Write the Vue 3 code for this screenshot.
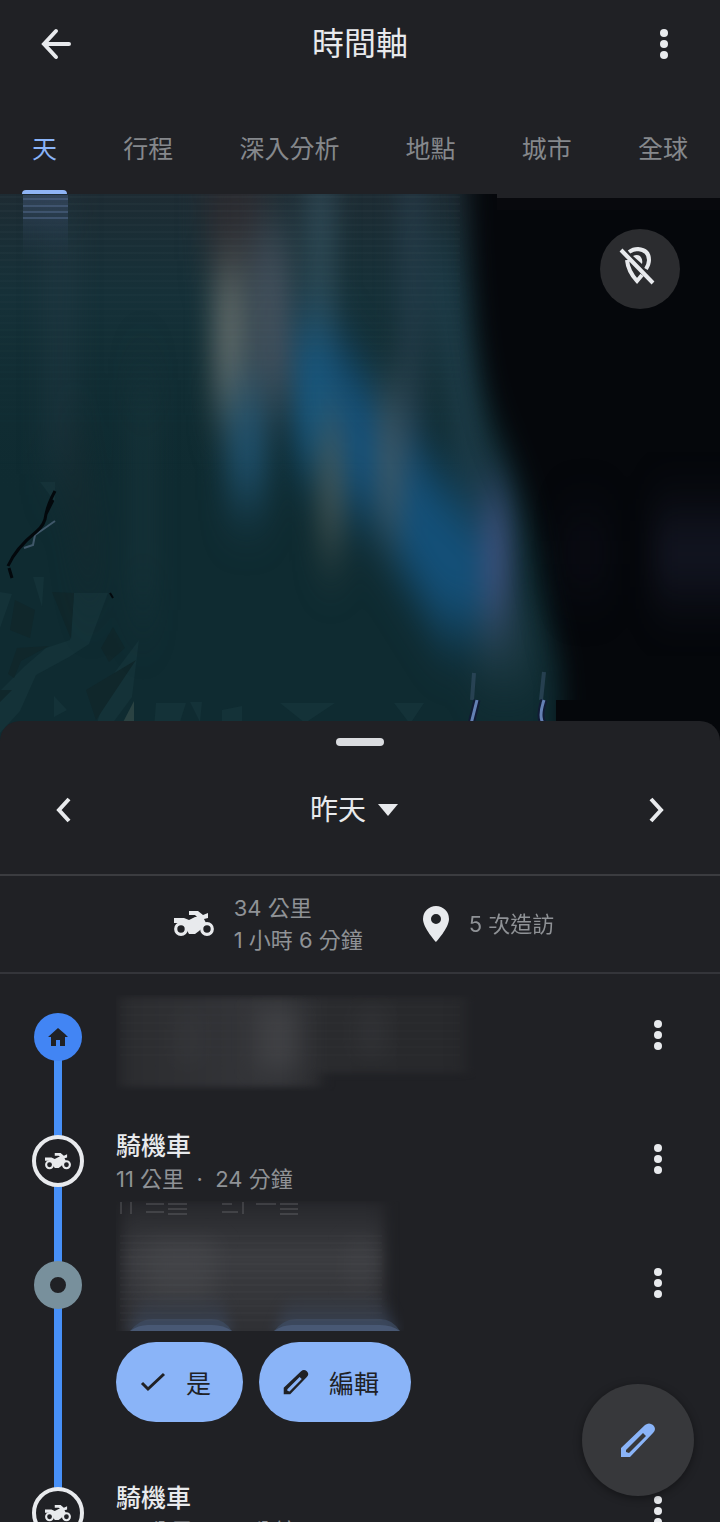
<script setup>
import { ref } from 'vue'

const tabs = ['天', '行程', '深入分析', '地點', '城市', '全球']
const activeTab = ref('天')

const entries = [
  { id: 1, kind: 'home' },
  { id: 2, kind: 'ride', title: '騎機車', detail: '11 公里  ·  24 分鐘' },
  { id: 3, kind: 'place' },
  { id: 4, kind: 'ride', title: '騎機車', detail: '8.1 公里  ·  12 分鐘' }
]
</script>

<template>
  <main class="app">
    <svg class="defs" aria-hidden="true">
      <symbol id="dots" viewBox="0 0 32 32">
        <circle cx="16" cy="5" r="4" /><circle cx="16" cy="16" r="4" /><circle cx="16" cy="27" r="4" />
      </symbol>
      <symbol id="bike" viewBox="0 0 40 26">
        <circle cx="7" cy="18" r="5.3" fill="none" stroke="currentColor" stroke-width="3.2" />
        <circle cx="33" cy="18" r="5.3" fill="none" stroke="currentColor" stroke-width="3.2" />
        <path d="M0 7h10l5 2 6-3h2l-2-2h-6V0h9l5 4 5-2v5l-4 1 2 4-4 5-3 3-4 3h-6l-5-9-4-2H0z" />
      </symbol>
      <symbol id="pen" viewBox="0 0 36 36">
        <path fill-rule="evenodd" d="M1 26 25 3q4-3 8 0 4 4 0 8L10 35H1zM6 28v2l3 1 17-17-3-3z" />
      </symbol>
    </svg>

    <header class="top-bar">
      <button type="button" class="icon-button" aria-label="返回">
        <svg class="back" viewBox="0 0 32 32"><path d="M29 16H4M16 3 4 16l12 13" /></svg>
      </button>
      <h1>時間軸</h1>
      <button type="button" class="icon-button" aria-label="更多">
        <svg class="dots"><use href="#dots" /></svg>
      </button>
    </header>

    <nav class="tabs">
      <button
        v-for="tab in tabs"
        :key="tab"
        type="button"
        class="tab"
        :class="{ active: tab === activeTab }"
        @click="activeTab = tab"
      >{{ tab }}</button>
    </nav>

    <section class="map">
      <svg class="map-canvas" viewBox="0 194 720 547" preserveAspectRatio="xMidYMin slice" aria-hidden="true">
        <defs>
          <filter id="soft" x="-200%" y="-100%" width="500%" height="300%" color-interpolation-filters="sRGB">
            <feGaussianBlur stdDeviation="13 32" />
          </filter>
          <filter id="edge" x="-30%" y="-30%" width="160%" height="160%" color-interpolation-filters="sRGB">
            <feGaussianBlur stdDeviation="12 20" />
          </filter>
          <linearGradient id="haze" x1="0" y1="0" x2="0" y2="1">
            <stop offset="0" stop-color="#202b33" stop-opacity=".85" />
            <stop offset=".35" stop-color="#1a343d" stop-opacity=".6" />
            <stop offset="1" stop-color="#102c32" stop-opacity="0" />
          </linearGradient>
          <linearGradient id="tabSmear" x1="0" y1="0" x2="0" y2="1">
            <stop offset="0" stop-color="#3a4d68" stop-opacity=".7" />
            <stop offset="1" stop-color="#203645" stop-opacity="0" />
          </linearGradient>
          <pattern id="lines" width="8" height="7" patternUnits="userSpaceOnUse">
            <rect width="8" height="2" fill="#92a4b8" opacity=".04" />
          </pattern>
          <linearGradient id="fade" x1="0" y1="0" x2="0" y2="1">
            <stop offset="0" stop-color="#fff" /><stop offset="1" stop-color="#fff" stop-opacity="0" />
          </linearGradient>
          <mask id="linesFade"><rect y="194" width="460" height="290" fill="url(#fade)" /></mask>
        </defs>
        <rect y="194" width="720" height="547" fill="#0f2b31" />
        <rect y="194" width="500" height="300" fill="url(#haze)" />

        <!-- terrain facets -->
        <g fill="#143238">
          <path d="M74 593h34l-19 51-20 13-33 18-16 36-20 22v-42l25-25 21-18 24-8z" />
          <path d="M139 640l-27 36-18 56h12l26-35z" />
          <path d="M33 577h11l-2 30zM0 592l12 2-12 34zM40 482h15v20zM54 696l13 14-13 7z" />
          <path d="M156 703h30l-8 25h-24zM190 702h12l-2 20zM280 703h55l-30 20zM222 710l20-4v20h-20zM394 703h30l-14 21z" />
        </g>
        <g fill="#10272b">
          <path d="M52 592l22 1-3 46zM15 600l20 10-5 28-20-8zM113 627l12 21-16 14-8-14z" />
          <path d="M17 648l32-2-28 15-7 17-6-4zM0 690h12l-12 12zM86 690l50-30-40 60z" />
        </g>
        <path d="M119 730l15-29v20z" fill="#2a4242" />

        <g filter="url(#soft)">
          <path d="M45 194h30v280H45z" fill="#263b49" opacity=".4" />
          <path d="M60 430h20l20 160H85z" fill="#1b292f" opacity=".6" />
          <path d="M135 380h16v230h-16z" fill="#1e3a41" opacity=".6" />
          <path d="M205 150h60v110h-60z" fill="#2a2a2f" />
          <path d="M214 265h30v150h-30z" fill="#616a69" />
          <path d="M250 235h42v170h-42z" fill="#46525e" opacity=".9" />
          <path d="M308 165h25v210h-25z" fill="#355260" opacity=".8" />
          <path d="M402 160h20v340h-20z" fill="#294050" opacity=".8" />
          <path d="M226 390h42v110h-42z" fill="#215573" opacity=".85" />
          <path d="M294 320l46 25 72 100 86 100-10 90-48-5-66-105-80-70z" fill="#145079" />
          <path d="M296 330h32v140h-32z" fill="#17587f" opacity=".7" />
          <path d="M320 420h22v130h-22z" fill="#4d5a56" opacity=".9" />
          <path d="M378 390h24v140h-24z" fill="#435862" opacity=".9" />
          <path d="M425 250h30l40 250-35-10z" fill="#213f4c" opacity=".8" />
          <path d="M482 490h30v130h-30z" fill="#3b507a" />
          <path d="M475 620h60v55h-60z" fill="#23404b" opacity=".8" />
        </g>

        <path d="M468 100H900V900H562V670q-8-30-18-80-12-90-46-160-32-80-30-330z" fill="#05070b" filter="url(#edge)" />
        <path d="M497 198h223v12H497z" fill="#08090d" />
        <path d="M556 700h164v41H556z" fill="#05070b" />
        <rect y="194" x="497" width="223" height="4" fill="#202125" />
        <g filter="url(#soft)">
          <rect x="560" y="530" width="50" height="45" fill="#14172a" opacity=".4" />
          <rect x="654" y="520" width="100" height="68" fill="#1d2032" opacity=".7" />
        </g>
        <rect y="194" width="460" height="290" fill="url(#lines)" mask="url(#linesFade)" />

        <!-- trail left by the tab marker -->
        <rect x="23" y="195" width="45" height="72" fill="url(#tabSmear)" />
        <path d="M23 199h45M23 206h45M23 212h45M23 218h45" stroke="#536a8d" stroke-width="2" opacity=".5" />

        <!-- rivers and roads -->
        <path d="M55 521l-20 14-2 10-9 3" fill="none" stroke="#40586a" stroke-width="2" />
        <path d="M55 491q-7 13-9 23-1 11-10 18-20 16-28 34M46 514l7-14M9 568l3 10" fill="none" stroke="#03080c" stroke-width="3" />
        <path d="M110 593l3 5" fill="none" stroke="#03080c" stroke-width="2" />
        <path d="M474 673l-2 27M544 672l-3 28" fill="none" stroke="#3e5670" stroke-width="4" opacity=".5" />
        <path d="M477 700l-6 24M544 700q-6 18 0 24" fill="none" stroke="#111b35" stroke-width="7" />
        <path d="M477 700l-6 24M544 700q-6 18 0 24" fill="none" stroke="#6480b4" stroke-width="3" />
      </svg>
      <button type="button" class="map-button" aria-label="隱藏地點">
        <svg viewBox="0 0 36 38">
          <path d="M2 3l32 33M10 5q4-3 9-3 11 1 11 11 0 4-3 9M8 13q1 11 10 21l5-6" />
          <path class="core" d="M14 9q4-2 7 0 3 3 2 8z" />
        </svg>
      </button>
    </section>

    <section class="sheet">
      <div class="handle"></div>

      <div class="date-row">
        <button type="button" class="icon-button" aria-label="前一天">
          <svg class="chevron" viewBox="0 0 16 26"><path d="M13 2 3 13l10 11" /></svg>
        </button>
        <button type="button" class="date-button">
          昨天
          <svg class="caret" viewBox="0 0 20 12"><path d="M0 0h20L10 12z" /></svg>
        </button>
        <button type="button" class="icon-button" aria-label="後一天">
          <svg class="chevron" viewBox="0 0 16 26"><path d="M3 2l10 11L3 24" /></svg>
        </button>
      </div>

      <div class="stats">
        <div class="stat">
          <svg class="stat-bike"><use href="#bike" /></svg>
          <p>34 公里<br />1 小時 6 分鐘</p>
        </div>
        <div class="stat">
          <svg class="stat-pin" viewBox="0 0 26 36">
            <path fill-rule="evenodd" d="M13 0A13 13 0 0 0 0 13c0 9 13 23 13 23s13-14 13-23A13 13 0 0 0 13 0zm0 8a5 5 0 1 1 0 10 5 5 0 0 1 0-10z" />
          </svg>
          <p>5 次造訪</p>
        </div>
      </div>

      <ol class="timeline">
        <li v-for="entry in entries" :key="entry.id" class="entry" :class="entry.kind">
          <div class="rail">
            <span class="node">
              <svg v-if="entry.kind === 'home'" class="node-home" viewBox="0 0 20 18">
                <path d="M10 0 0 9h3v9h5v-6h4v6h5V9h3l-3-3z" />
              </svg>
              <svg v-else-if="entry.kind === 'ride'" class="node-bike" viewBox="0 0 40 26"><use href="#bike" /></svg>
            </span>
          </div>

          <div class="body">
            <svg v-if="entry.kind === 'home'" class="redacted" viewBox="0 0 360 96" aria-hidden="true">
              <defs>
                <filter id="smudge" x="-10%" y="-10%" width="120%" height="120%" color-interpolation-filters="sRGB">
                  <feGaussianBlur stdDeviation="7 3" />
                </filter>
                <filter id="inner" x="-100%" y="-50%" width="300%" height="200%" color-interpolation-filters="sRGB">
                  <feGaussianBlur stdDeviation="12 10" />
                </filter>
                <linearGradient id="smudgeTone">
                  <stop offset="0" stop-color="#2b2c2f" /><stop offset=".45" stop-color="#35363a" />
                  <stop offset=".6" stop-color="#2a2b2e" /><stop offset="1" stop-color="#27282b" />
                </linearGradient>
              </defs>
              <path d="M4 2h346v76H204v14H4z" fill="url(#smudgeTone)" filter="url(#smudge)" />
              <path d="M142 14h40v60h-40z" fill="#47484b" opacity=".6" filter="url(#inner)" />
              <path d="M62 18h22v52H62zM242 12h26v50h-26z" fill="#3d3e42" opacity=".4" filter="url(#inner)" />
              <path d="M4 12h340M4 20h340M4 28h340M4 36h340M4 44h340M4 52h340M4 60h340" stroke="#55565a" opacity=".1" />
            </svg>

            <template v-else-if="entry.kind === 'ride'">
              <h2>{{ entry.title }}</h2>
              <p>{{ entry.detail }}</p>
            </template>

            <template v-else>
              <svg class="redacted tall" viewBox="0 0 288 132" aria-hidden="true">
                <defs>
                  <linearGradient id="tallTone" x1="0" y1="0" x2="0" y2="1">
                    <stop offset="0" stop-color="#26272b" /><stop offset=".4" stop-color="#3b3c40" />
                    <stop offset="1" stop-color="#2d2e32" />
                  </linearGradient>
                  <linearGradient id="chipTone" x1="0" y1="0" x2="0" y2="1">
                    <stop offset="0" stop-color="#36445c" stop-opacity="0" /><stop offset="1" stop-color="#42526e" />
                  </linearGradient>
                  <clipPath id="tallClip"><path d="M0 1h288v130H0z" /></clipPath>
                </defs>
                <g clip-path="url(#tallClip)">
                  <path d="M6 2h262v140H6z" fill="url(#tallTone)" filter="url(#smudge)" />
                  <path d="M30 40h70v60H30zM236 40h14v50h-14z" fill="#4a4b4f" opacity=".5" filter="url(#inner)" />
                  <path d="M26 92h80l8 39H14zM172 92h96l12 39H160z" fill="url(#chipTone)" opacity=".6" filter="url(#smudge)" />
                  <path d="M14 131q10-12 22-12h60q12 0 20 12zM158 131q10-12 22-12h84q12 0 20 12z" fill="#3d4b63" opacity=".7" />
                  <path d="M14 131q8-6 18-6h64q12 0 20 6zM158 131q8-6 18-6h88q12 0 20 6z" fill="#4c5d7b" opacity=".8" />
                  <path d="M4 36h262M4 43h262M4 50h262M4 57h262M4 64h262M4 71h262M4 78h262M4 85h262M4 92h262M4 99h262M4 106h262M4 113h262M4 120h262" stroke="#77787c" opacity=".1" />
                  <path d="M5 2v12M15 2v12M30 4h18M30 12h18M52 4h19M52 9h19M52 14h19M106 4h10M106 12h16M127 2v12M140 4h20M164 4h18M164 9h18M164 14h18" fill="none" stroke="#8b8c90" stroke-width="2" opacity=".25" />
                </g>
              </svg>
              <div class="chips">
                <button type="button" class="chip">
                  <svg class="chip-icon" viewBox="0 0 26 26"><path d="M2 14l6 6L24 5" /></svg>是
                </button>
                <button type="button" class="chip">
                  <svg class="chip-icon" viewBox="0 0 36 36"><use href="#pen" /></svg>編輯
                </button>
              </div>
            </template>
          </div>

          <button type="button" class="icon-button more" aria-label="更多選項">
            <svg class="dots"><use href="#dots" /></svg>
          </button>
        </li>
      </ol>
    </section>

    <button type="button" class="fab" aria-label="編輯時間軸">
      <svg class="fab-pen"><use href="#pen" /></svg>
    </button>
  </main>
</template>

<style>
body { background: #202125; }
</style>

<style scoped>
.app {
  position: relative;
  display: flex;
  flex-direction: column;
  height: 100vh;
  overflow: hidden;
  background: #202125;
  color: #e8eaed;
  font-family: Inter, "Noto Sans CJK TC", sans-serif;
  font-weight: 400;
}
.defs { position: absolute; width: 0; height: 0; }
h1, h2, p, ol { margin: 0; padding: 0; }
svg { display: block; fill: currentColor; }
button { margin: 0; padding: 0; border: 0; background: none; color: inherit; font: inherit; cursor: pointer; }

.icon-button { display: flex; align-items: center; justify-content: center; width: 48px; height: 48px; }
.dots { width: 32px; height: 32px; }

.top-bar { display: flex; align-items: center; justify-content: space-between; flex: none; height: 88px; padding: 0 32px; }
.top-bar h1 { font-size: 32px; line-height: 48px; font-weight: 400; }
.back { width: 32px; height: 32px; fill: none; stroke: currentColor; stroke-width: 4; stroke-linecap: round; }

.tabs { display: flex; justify-content: space-between; flex: none; height: 106px; padding: 0 22px; }
.tab { position: relative; height: 106px; padding: 16px 10px 0; color: #85888c; font-size: 25px; line-height: 32px; }
.tab.active { color: #8ab4f8; }
.tab.active::after { content: ''; position: absolute; right: 0; bottom: 0; left: 0; height: 4px; border-radius: 4px 4px 0 0; background: #8fb4f5; }

.map { position: relative; flex: none; aspect-ratio: 720 / 547; }
.map-canvas { width: 100%; height: 100%; }
.map-button {
  position: absolute;
  top: 35px;
  right: 40px;
  display: flex;
  align-items: center;
  justify-content: center;
  box-sizing: border-box;
  width: 80px;
  height: 80px;
  padding: 0 6px 6px 0;
  border-radius: 50%;
  background: #2b2c2f;
}
.map-button svg { width: 36px; height: 38px; fill: none; stroke: currentColor; stroke-width: 4; }
.map-button .core { fill: currentColor; stroke: none; }

.sheet { position: relative; flex: 1; min-height: 0; margin-top: -20px; border-radius: 20px 20px 0 0; background: #202125; overflow: hidden; }
.handle { width: 48px; height: 8px; margin: 17px auto 0; border-radius: 4px; background: #dadce0; }

.date-row { display: flex; align-items: center; justify-content: space-between; height: 128px; padding: 0 40px; border-bottom: 2px solid #3b3c40; }
.date-button { display: flex; align-items: center; gap: 12px; padding-right: 12px; font-size: 28px; line-height: 48px; }
.caret { width: 20px; height: 12px; }
.chevron { width: 16px; height: 26px; fill: none; stroke: currentColor; stroke-width: 4; }

.stats { display: flex; align-items: center; justify-content: center; gap: 60px; height: 96px; padding-left: 8px; border-bottom: 2px solid #34353a; }
.stat { display: flex; align-items: center; gap: 20px; }
.stat p { color: #8f9296; font-size: 22px; line-height: 32px; }
.stat-bike { width: 40px; height: 26px; }
.stat-pin { width: 26px; height: 36px; }

.timeline { padding-top: 1px; list-style: none; }
.entry { display: grid; grid-template-columns: 116px 1fr 124px; min-height: 124px; }
.entry.place { min-height: 228px; }
.rail { display: flex; justify-content: center; align-items: flex-start; background: linear-gradient(#4790f8, #4790f8) center / 8px 100% no-repeat; }
.home .rail { background-position: center 62px; }
.node { display: flex; align-items: center; justify-content: center; box-sizing: border-box; width: 48px; height: 48px; margin-top: 38px; border-radius: 50%; }
.home .node { background: #4285f4; color: #202125; }
.ride .node { width: 52px; height: 52px; margin-top: 36px; border: 4px solid #e8eaed; background: #202125; }
.place .node { border: 16px solid #78909c; background: #202125; }
.node-home { width: 20px; height: 18px; }
.node-bike { width: 26px; height: 17px; }

.body h2 { margin-top: 30px; font-size: 25px; line-height: 34px; font-weight: 500; }
.body p { color: #8f9296; font-size: 22px; line-height: 32px; white-space: pre; }
.redacted { width: 360px; height: 96px; margin-top: 20px; }
.redacted.tall { width: 288px; height: 132px; margin-top: -23px; }
.more { justify-self: center; margin-top: 36px; }

.chips { display: flex; gap: 16px; margin-top: 10px; }
.chip { display: flex; align-items: center; gap: 20px; height: 80px; padding: 0 32px 0 24px; border-radius: 40px; background: #8ab4f8; color: #202125; font-size: 25px; }
.chip-icon { width: 26px; height: 26px; }
.chip-icon > path { fill: none; stroke: currentColor; stroke-width: 3; }

.fab {
  position: absolute;
  right: 26px;
  bottom: 26px;
  display: flex;
  align-items: center;
  justify-content: center;
  width: 112px;
  height: 112px;
  border-radius: 50%;
  background: #37383b;
  box-shadow: 0 2px 8px rgba(0, 0, 0, 0.4);
  color: #8ab4f8;
}
.fab-pen { width: 36px; height: 36px; }
</style>
